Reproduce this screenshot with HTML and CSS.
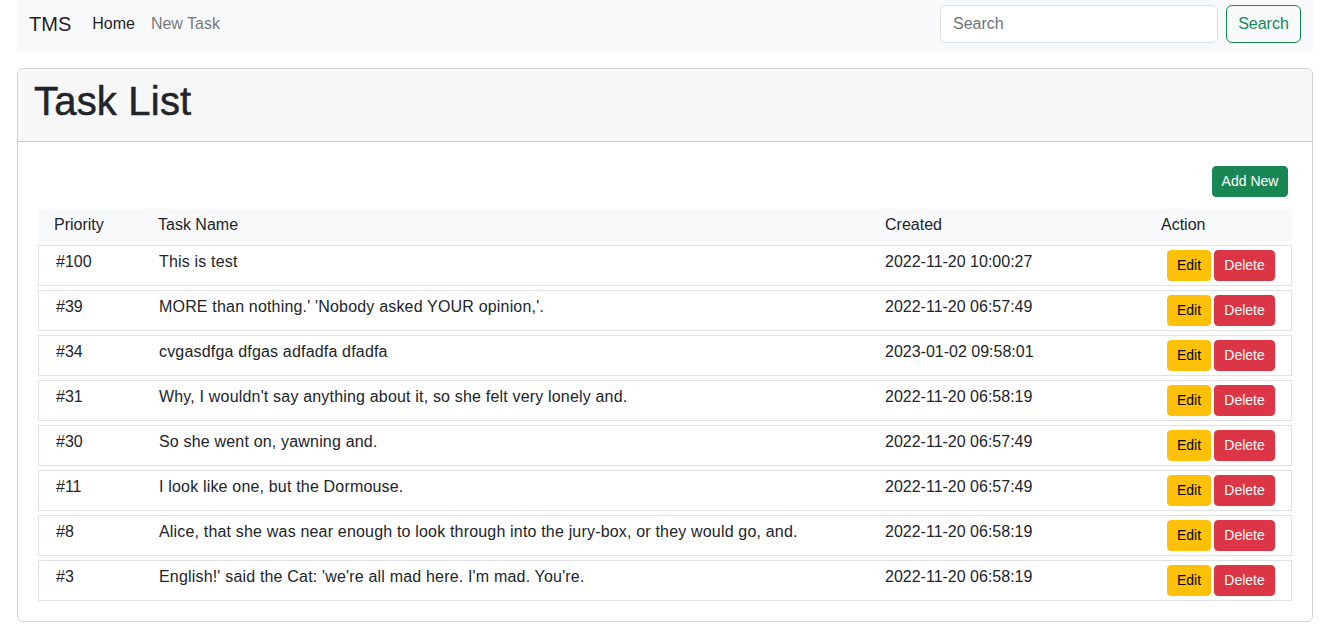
FILE: index.html
```html
<!DOCTYPE html>
<html lang="en">
<head>
<meta charset="utf-8">
<title>TMS</title>
<link rel="stylesheet" href="styles.css">
</head>
<body>
<div class="page">
  <nav class="navbar">
    <a class="brand" href="#">TMS</a>
    <a class="nav-link active" href="#">Home</a>
    <a class="nav-link" href="#">New Task</a>
    <form class="search">
      <input class="search-input" type="text" placeholder="Search">
      <button class="btn btn-outline-success" type="button">Search</button>
    </form>
  </nav>

  <section class="card">
    <header class="card-header">
      <h1>Task List</h1>
    </header>
    <div class="card-body">
      <div class="toolbar">
        <a class="btn btn-sm btn-success" href="#">Add New</a>
      </div>
      <div class="table">
        <div class="tr thead">
          <div class="td">Priority</div>
          <div class="td">Task Name</div>
          <div class="td">Created</div>
          <div class="td">Action</div>
        </div>
        <div class="tr trow">
          <div class="td">#100</div>
          <div class="td name">This is test</div>
          <div class="td">2022-11-20 10:00:27</div>
          <div class="td actions"><a class="btn btn-sm btn-edit" href="#">Edit</a><a class="btn btn-sm btn-delete" href="#">Delete</a></div>
        </div>
        <div class="tr trow">
          <div class="td">#39</div>
          <div class="td name">MORE than nothing.' 'Nobody asked YOUR opinion,'.</div>
          <div class="td">2022-11-20 06:57:49</div>
          <div class="td actions"><a class="btn btn-sm btn-edit" href="#">Edit</a><a class="btn btn-sm btn-delete" href="#">Delete</a></div>
        </div>
        <div class="tr trow">
          <div class="td">#34</div>
          <div class="td name">cvgasdfga dfgas adfadfa dfadfa</div>
          <div class="td">2023-01-02 09:58:01</div>
          <div class="td actions"><a class="btn btn-sm btn-edit" href="#">Edit</a><a class="btn btn-sm btn-delete" href="#">Delete</a></div>
        </div>
        <div class="tr trow">
          <div class="td">#31</div>
          <div class="td name">Why, I wouldn't say anything about it, so she felt very lonely and.</div>
          <div class="td">2022-11-20 06:58:19</div>
          <div class="td actions"><a class="btn btn-sm btn-edit" href="#">Edit</a><a class="btn btn-sm btn-delete" href="#">Delete</a></div>
        </div>
        <div class="tr trow">
          <div class="td">#30</div>
          <div class="td name">So she went on, yawning and.</div>
          <div class="td">2022-11-20 06:57:49</div>
          <div class="td actions"><a class="btn btn-sm btn-edit" href="#">Edit</a><a class="btn btn-sm btn-delete" href="#">Delete</a></div>
        </div>
        <div class="tr trow">
          <div class="td">#11</div>
          <div class="td name">I look like one, but the Dormouse.</div>
          <div class="td">2022-11-20 06:57:49</div>
          <div class="td actions"><a class="btn btn-sm btn-edit" href="#">Edit</a><a class="btn btn-sm btn-delete" href="#">Delete</a></div>
        </div>
        <div class="tr trow">
          <div class="td">#8</div>
          <div class="td name">Alice, that she was near enough to look through into the jury-box, or they would go, and.</div>
          <div class="td">2022-11-20 06:58:19</div>
          <div class="td actions"><a class="btn btn-sm btn-edit" href="#">Edit</a><a class="btn btn-sm btn-delete" href="#">Delete</a></div>
        </div>
        <div class="tr trow">
          <div class="td">#3</div>
          <div class="td name">English!' said the Cat: 'we're all mad here. I'm mad. You're.</div>
          <div class="td">2022-11-20 06:58:19</div>
          <div class="td actions"><a class="btn btn-sm btn-edit" href="#">Edit</a><a class="btn btn-sm btn-delete" href="#">Delete</a></div>
        </div>
      </div>
    </div>
  </section>
</div>
</body>
</html>
```

FILE: styles.css
```css
* { box-sizing: border-box; }

html, body {
  margin: 0;
  padding: 0;
  background: #fff;
}

body {
  font-family: "Liberation Sans", Arial, sans-serif;
  font-size: 16px;
  line-height: 24px;
  color: #212529;
}

.page {
  width: 1296px;
  margin-left: 17px;
}

/* Navbar */
.navbar {
  display: flex;
  align-items: center;
  height: 52px;
  padding: 0 12px 4px 12px;
  background: #f8f9fa;
}

.brand {
  font-size: 20px;
  line-height: 30px;
  color: rgba(0, 0, 0, 0.9);
  text-decoration: none;
  margin-right: 13px;
}

.nav-link {
  padding: 0 8px;
  color: rgba(0, 0, 0, 0.55);
  text-decoration: none;
}

.nav-link.active {
  color: rgba(0, 0, 0, 0.9);
}

.search {
  margin-left: auto;
  display: flex;
  gap: 8px;
}

.search-input {
  width: 278px;
  height: 38px;
  padding: 6px 12px;
  border: 1px solid #dee2e6;
  border-radius: 6px;
  font-family: inherit;
  font-size: 16px;
  color: #212529;
  background: #fff;
  outline: none;
}

.search-input::placeholder {
  color: #6c757d;
}

.btn {
  display: inline-block;
  font-family: inherit;
  text-align: center;
  text-decoration: none;
  border: 1px solid transparent;
  cursor: pointer;
}

.btn-outline-success {
  height: 38px;
  width: 75px;
  padding: 6px 0;
  font-size: 16px;
  line-height: 24px;
  color: #198754;
  border-color: #198754;
  border-radius: 6px;
  background: transparent;
}

/* Card */
.card {
  margin-top: 16px;
  border: 1px solid rgba(0, 0, 0, 0.175);
  border-radius: 6px;
  overflow: hidden;
}

.card-header {
  padding: 8px 16px;
  background: #f7f7f7;
  border-bottom: 1px solid rgba(0, 0, 0, 0.175);
}

.card-header h1 {
  margin: 0 0 8px 0;
  font-size: 40px;
  line-height: 48px;
  font-weight: 500;
  letter-spacing: 0.2px;
  -webkit-text-stroke: 0.5px #212529;
}

.card-body {
  padding: 16px;
}

.toolbar {
  display: flex;
  justify-content: flex-end;
  padding: 8px 8px 0 0;
  margin-bottom: 8px;
}

.btn-sm {
  height: 31px;
  padding: 4px 0;
  font-size: 14px;
  line-height: 21px;
  border-radius: 4px;
}

.btn-success {
  width: 76px;
  background: #198754;
  border-color: #198754;
  color: #fff;
}

/* Table */
.table {
  display: flex;
  flex-direction: column;
  gap: 4px;
  padding: 4px;
}

.tr {
  display: grid;
  grid-template-columns: 104px 727px 276px 1fr;
}

.thead {
  height: 32px;
  background: #f8f9fa;
}

.trow {
  height: 41px;
  border: 1px solid #dee2e6;
}

.td {
  padding: 4px 16px;
  white-space: nowrap;
}

.trow .td:first-child {
  padding-left: 17px;
}

.trow .td:nth-child(3) {
  padding-left: 15px;
}

.name {
  letter-spacing: 0.18px;
}

.actions {
  display: flex;
  justify-content: flex-end;
  gap: 3px;
  padding: 4px 16px;
}

.btn-edit {
  width: 44px;
  background: #ffc107;
  border-color: #ffc107;
  color: #000;
}

.btn-delete {
  width: 61px;
  background: #dc3545;
  border-color: #dc3545;
  color: #fff;
}
```
